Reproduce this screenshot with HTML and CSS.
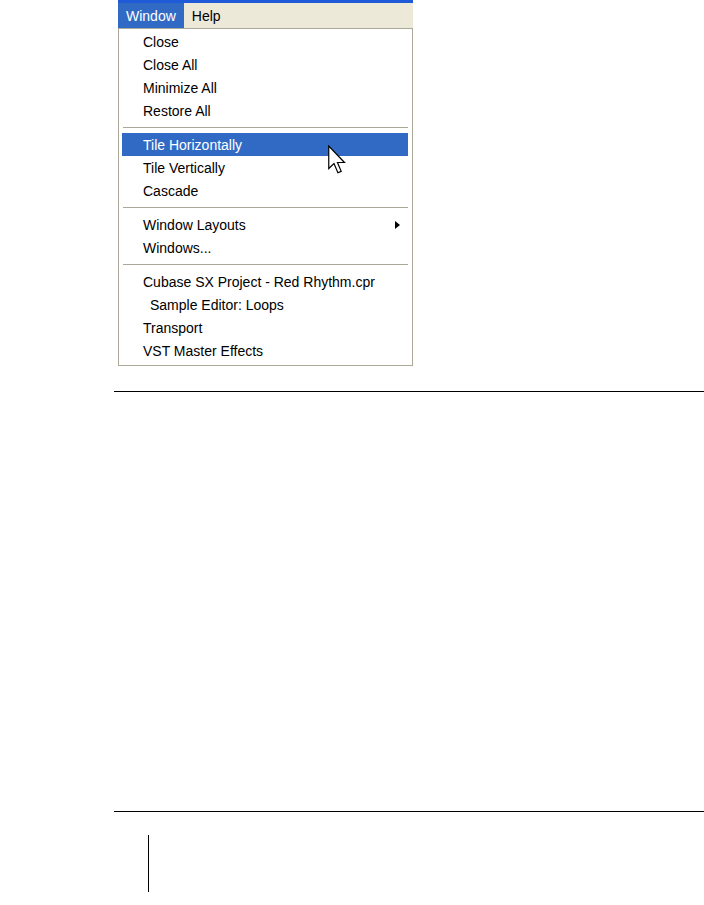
FILE: index.html
```html
<!DOCTYPE html>
<html lang="en">
<head>
  <meta charset="UTF-8" />
  <meta name="viewport" content="width=device-width, initial-scale=1.0"/>
  <title>Window menu</title>
  <link rel="stylesheet" href="styles.css">
</head>
<body>

  <!-- Screenshot of the Window menu -->
  <div class="shot">
    <div class="title-strip"></div>

    <div class="menubar">
      <span class="menubar-item active">Window</span>
      <span class="menubar-item">Help</span>
    </div>

    <ul class="dropdown">
      <li class="item">Close</li>
      <li class="item">Close All</li>
      <li class="item">Minimize All</li>
      <li class="item">Restore All</li>
      <li class="sep"></li>
      <li class="item hover">Tile Horizontally</li>
      <li class="item">Tile Vertically</li>
      <li class="item">Cascade</li>
      <li class="sep"></li>
      <li class="item has-sub">Window Layouts <span class="sub-arrow"></span></li>
      <li class="item">Windows...</li>
      <li class="sep"></li>
      <li class="item">Cubase SX Project - Red Rhythm.cpr</li>
      <li class="item indent">Sample Editor: Loops</li>
      <li class="item">Transport</li>
      <li class="item">VST Master Effects</li>
    </ul>

    <!-- mouse pointer over the highlighted item -->
    <svg class="cursor" viewBox="0 0 12 19" width="18" height="29">
      <polygon points="0.5,0.5 0.5,15.5 4,12.2 6.6,18.3 8.8,17.4 6.3,11.5 11,11.5"
               fill="#fff" stroke="#000" stroke-width="0.8" stroke-linejoin="miter"/>
    </svg>
  </div>

  <hr class="rule rule-top">
  <hr class="rule rule-bottom">

  <!-- vertical margin line -->
  <div class="margin-bar"></div>

</body>
</html>
```

FILE: styles.css
```css
/* ======= Base ======= */
body {
  margin: 0;
  padding: 0;
  background: #fff;
  font-family: "Liberation Sans", Arial, sans-serif;
  font-size: 14px;
  color: #000;
}

/* ======= Screenshot block ======= */
.shot {
  position: relative;
  margin-left: 118px;
  width: 295px;
}

.title-strip {
  height: 3px;
  background: #1f5ad9;
}

/* ======= Menu bar ======= */
.menubar {
  display: flex;
  height: 25px;
  background: #ece9d8;
}

.menubar-item {
  display: flex;
  align-items: center;
  padding: 0 8px;
}

.menubar-item.active {
  background: #316ac5;
  color: #fff;
}

/* ======= Dropdown ======= */
.dropdown {
  list-style: none;
  margin: 0;
  padding: 1px 3px 3px;
  background: #fff;
  border: 1px solid #aca899;
}

.item {
  display: flex;
  align-items: center;
  justify-content: space-between;
  height: 23px;
  padding: 0 9px 0 21px;
  white-space: nowrap;
}

.item.hover {
  background: #316ac5;
  color: #fff;
  margin-right: 1px;
}

.item.indent {
  padding-left: 28px;
}

.sep {
  height: 11px;
  display: flex;
  align-items: center;
  padding: 0 1px;
}
.sep::before {
  content: "";
  flex: 1;
  height: 1px;
  background: #aca899;
}

/* small black triangle for the submenu */
.sub-arrow {
  width: 0;
  height: 0;
  border-top: 4.5px solid transparent;
  border-bottom: 4.5px solid transparent;
  border-left: 5px solid #000;
}

/* ======= Pointer ======= */
.cursor {
  position: absolute;
  left: 210px;
  top: 145px;
}

/* ======= Page rules ======= */
.rule {
  border: 0;
  height: 1px;
  background: #000;
  margin: 0 0 0 114px;
}

.rule-top {
  margin-top: 25px;
}

.rule-bottom {
  margin-top: 419px;
}

.margin-bar {
  width: 1px;
  height: 57px;
  background: #000;
  margin: 23px 0 0 148px;
}
```
